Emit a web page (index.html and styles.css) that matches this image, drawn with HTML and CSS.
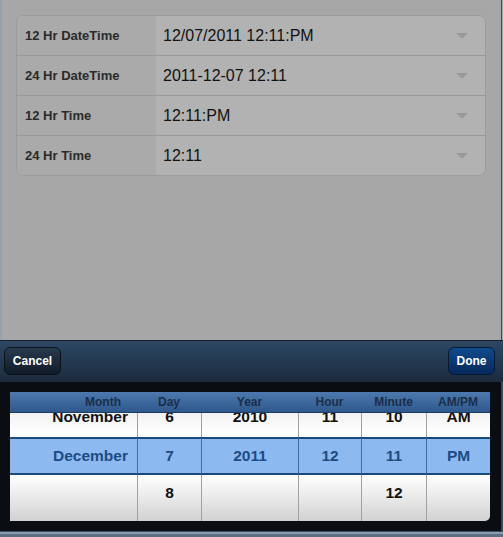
FILE: index.html
```html
<!DOCTYPE html>
<html>
<head>
<meta charset="utf-8">
<link rel="stylesheet" href="styles.css">
</head>
<body>
<div class="screen">
  <div class="content">
    <div class="card">
      <div class="row"><div class="label">12 Hr DateTime</div><div class="value"><span>12/07/2011 12:11:PM</span><i class="arrow"></i></div></div>
      <div class="row"><div class="label">24 Hr DateTime</div><div class="value"><span>2011-12-07 12:11</span><i class="arrow"></i></div></div>
      <div class="row"><div class="label">12 Hr Time</div><div class="value"><span>12:11:PM</span><i class="arrow"></i></div></div>
      <div class="row"><div class="label">24 Hr Time</div><div class="value"><span>12:11</span><i class="arrow"></i></div></div>
    </div>
  </div>
  <div class="picker">
    <div class="toolbar">
      <button class="btn cancel">Cancel</button>
      <button class="btn done">Done</button>
    </div>
    <div class="wheels">
      <div class="frame">
        <div class="col month">
          <div class="head">Month</div>
          <div class="view"><div class="list">
            <div class="cell">November</div>
            <div class="cell sel">December</div>
            <div class="cell"></div>
            <div class="cell"></div>
          </div></div>
        </div>
        <div class="col day">
          <div class="head">Day</div>
          <div class="view"><div class="list">
            <div class="cell">6</div>
            <div class="cell sel">7</div>
            <div class="cell">8</div>
            <div class="cell"></div>
          </div></div>
        </div>
        <div class="col year">
          <div class="head">Year</div>
          <div class="view"><div class="list">
            <div class="cell">2010</div>
            <div class="cell sel">2011</div>
            <div class="cell"></div>
            <div class="cell"></div>
          </div></div>
        </div>
        <div class="col hour">
          <div class="head">Hour</div>
          <div class="view"><div class="list">
            <div class="cell">11</div>
            <div class="cell sel">12</div>
            <div class="cell"></div>
            <div class="cell"></div>
          </div></div>
        </div>
        <div class="col minute">
          <div class="head">Minute</div>
          <div class="view"><div class="list">
            <div class="cell">10</div>
            <div class="cell sel">11</div>
            <div class="cell">12</div>
            <div class="cell"></div>
          </div></div>
        </div>
        <div class="col ampm">
          <div class="head">AM/PM</div>
          <div class="view"><div class="list">
            <div class="cell">AM</div>
            <div class="cell sel">PM</div>
            <div class="cell"></div>
            <div class="cell"></div>
          </div></div>
        </div>
      </div>
    </div>
    <div class="bottom-strip"></div>
  </div>
</div>
</body>
</html>
```

FILE: styles.css
```css
* { box-sizing: border-box; }
html, body { margin: 0; padding: 0; }
body {
  font-family: "Liberation Sans", Arial, sans-serif;
  background: #a7a7a7;
}
.screen {
  width: 503px;
  height: 537px;
  display: flex;
  flex-direction: column;
  background: #a7a7a7;
  box-shadow: inset 2px 0 #93a0ad, inset -1px 0 #a3a9af, inset -2px 0 #3b4a5b;
  overflow: hidden;
}
.content {
  flex: 1;
  padding: 15px 0 0 16px;
}
.card {
  width: 470px;
  border: 1px solid #9c9c9c;
  border-radius: 7px;
  overflow: hidden;
  background: #b2b2b2;
}
.row {
  display: flex;
  height: 40px;
  border-top: 1px solid #999;
}
.row:first-child { border-top: none; height: 39px; }
.label {
  width: 139px;
  background: #aaaaaa;
  display: flex;
  align-items: center;
  padding-left: 8px;
  font-weight: bold;
  font-size: 13px;
  color: #2b2b2b;
}
.value {
  flex: 1;
  display: flex;
  align-items: center;
  justify-content: space-between;
  padding: 0 17px 0 7px;
  font-size: 16px;
  color: #111;
}
.arrow {
  width: 0;
  height: 0;
  border-left: 6px solid transparent;
  border-right: 6px solid transparent;
  border-top: 6px solid #999;
}
.picker {
  height: 197px;
  display: flex;
  flex-direction: column;
}
.toolbar {
  height: 42px;
  border-top: 1px solid #17212c;
  background: linear-gradient(#2d4763, #1b2b3d);
  display: flex;
  justify-content: space-between;
  align-items: flex-start;
  padding: 6px 8px 0 4px;
}
.btn {
  height: 28px;
  border-radius: 6px;
  color: #fff;
  font-family: "Liberation Sans", Arial, sans-serif;
  font-weight: bold;
  font-size: 12px;
  padding: 0;
}
.cancel {
  width: 57px;
  border: 1px solid #0b121a;
  background: linear-gradient(#283a4e, #111b27);
}
.done {
  width: 47px;
  border: 1px solid #071a35;
  background: linear-gradient(#0f4b8f, #05295a);
}
.wheels {
  flex: 1;
  background: #0a0d11;
  padding: 10px 11px 9px 10px;
  box-shadow: inset -2px 0 #3b4a5b;
}
.frame {
  display: flex;
  height: 129px;
  width: 480px;
  border-radius: 0 0 5px 0;
  overflow: hidden;
}
.col { display: flex; flex-direction: column; }
.month { width: 127px; }
.day { width: 64px; }
.year { width: 97px; }
.hour { width: 63px; }
.minute { width: 65px; }
.ampm { width: 64px; }
.head {
  height: 21px;
  background: linear-gradient(#4d79ae, #2e588c);
  border-bottom: 1px solid #1d3c62;
  font-weight: bold;
  font-size: 12px;
  color: #1b2e4a;
  text-align: center;
  line-height: 21px;
}
.month .head { text-align: right; padding-right: 16px; }
.view {
  height: 108px;
  overflow: hidden;
  background: linear-gradient(#f2f2f2 0%, #fff 18%, #fff 58%, #d2d2d2 100%);
}
.list { margin-top: -14px; }
.cell {
  height: 38px;
  line-height: 36px;
  text-align: center;
  font-weight: bold;
  font-size: 15.5px;
  color: #111;
  border-left: 1px solid #a0a0a0;
}
.month .cell { border-left: none; text-align: right; padding-right: 9px; }
.cell.sel {
  background: #8cbaf0;
  border-top: 2px solid #1b4a80;
  border-bottom: 2px solid #1b4a80;
  border-left-color: #3f6ea6;
  line-height: 34px;
  color: #1d4b84;
}
.bottom-strip {
  height: 6px;
  background: linear-gradient(#3f4f62 0, #3f4f62 1px, #8b9bb0 1px, #8b9bb0 3px, #5d6d82 3px);
}
```
